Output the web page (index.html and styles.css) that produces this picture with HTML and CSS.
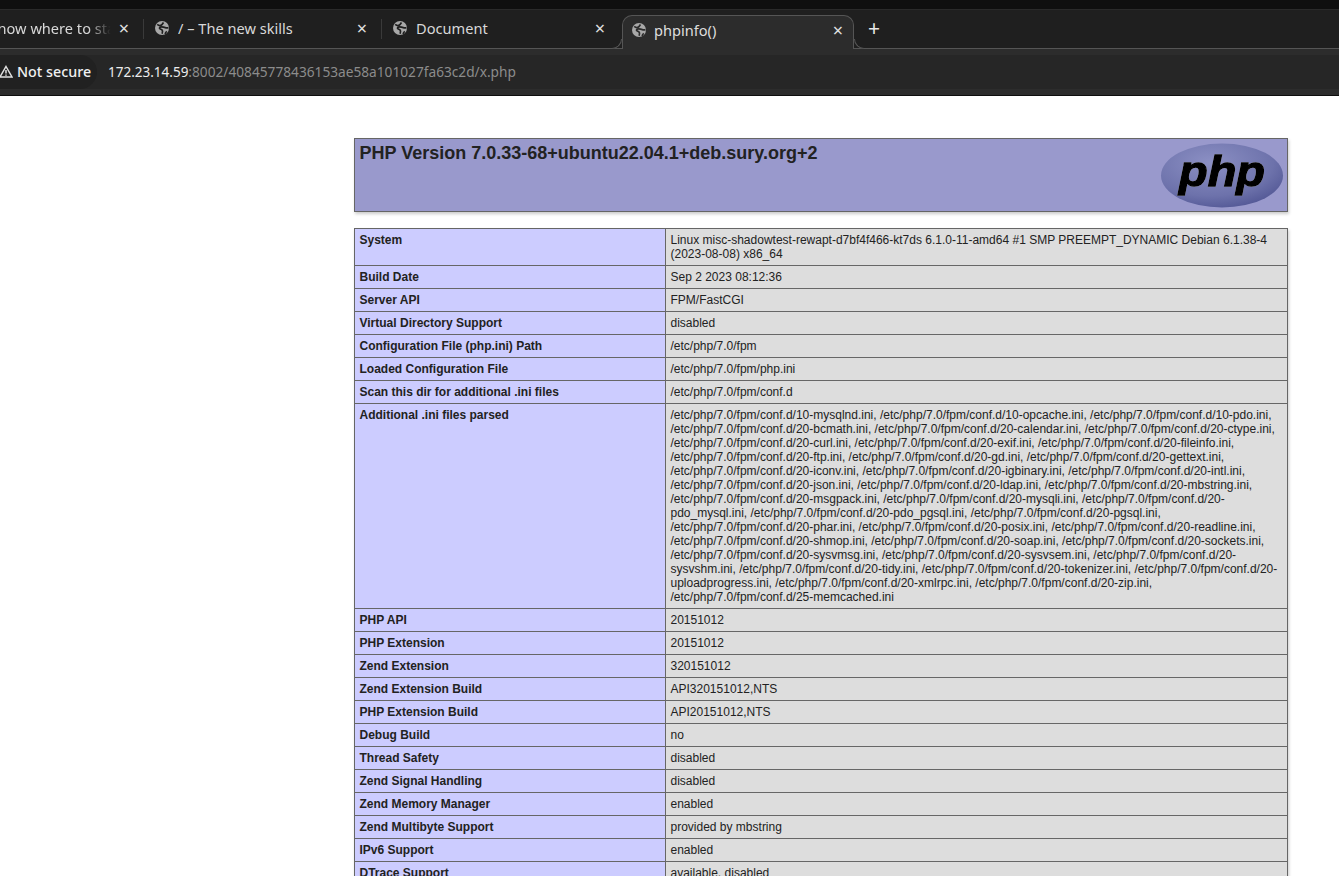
FILE: index.html
```html
<!DOCTYPE html>
<html lang="en">
<head>
  <meta charset="UTF-8" />
  <meta name="viewport" content="width=device-width, initial-scale=1.0" />
  <title>phpinfo()</title>
  <link rel="stylesheet" href="styles.css">
</head>
<body>
  <svg class="defs" width="0" height="0">
    <symbol id="globe" viewBox="0 0 16 16">
      <circle cx="8" cy="8" r="7" fill="#a8a8a8"/>
      <path d="M3.200 4.300c1.500 1.300 3 1.600 4.300.7.700-.5 1.300-1.500 2-2.500" fill="none" stroke="currentColor" stroke-width="1.700"/>
      <path d="M14.500 7.800c-1.700.5-3.500-.3-5-.7-1.500-.4-3.500-.3-4 .7-.5 1 1.500 1.400 2.500 2.200.8.700.6 2.300.1 3.800" fill="none" stroke="currentColor" stroke-width="1.700"/>
      <path d="M11 14c.3-1 .8-1.900 1.800-2.600" fill="none" stroke="currentColor" stroke-width="1.500"/>
    </symbol>
  </svg>

  <div class="tabstrip">
    <div class="tab">
      <span class="tab-title fade">I don't know where to start</span>
      <span class="tab-close">×</span>
    </div>
    <div class="tab sep">
      <svg class="tab-icon"><use href="#globe"/></svg>
      <span class="tab-title">/ – The new skills</span>
      <span class="tab-close">×</span>
    </div>
    <div class="tab sep">
      <svg class="tab-icon"><use href="#globe"/></svg>
      <span class="tab-title">Document</span>
      <span class="tab-close">×</span>
    </div>
    <div class="tab active">
      <svg class="tab-icon"><use href="#globe"/></svg>
      <span class="tab-title">phpinfo()</span>
      <span class="tab-close">×</span>
    </div>
    <span class="new-tab">+</span>
  </div>

  <div class="toolbar">
    <div class="omnibox">
      <div class="chip">
        <svg class="warn" viewBox="0 0 14 13"><path d="M7 1.500 13 12H1z M7 5v3.600 M7 9.600v1.200"/></svg>
        <span>Not secure</span>
      </div>
      <div class="url"><span class="host">172.23.14.59</span>:8002/40845778436153ae58a101027fa63c2d/x.php</div>
    </div>
  </div>

  <div class="page">
    <table class="head">
      <tr class="h">
        <td>
          <svg class="logo" viewBox="0 0 120 65">
            <defs>
              <radialGradient id="oval" cx="0.4" cy="0.3" r="0.8">
                <stop offset="0" stop-color="#8c90c4"/>
                <stop offset="0.65" stop-color="#6d72ab"/>
                <stop offset="1" stop-color="#4c5190"/>
              </radialGradient>
            </defs>
            <ellipse cx="60" cy="32.500" rx="61" ry="32" fill="url(#oval)"/>
            <text class="logo-text" x="60" y="43" text-anchor="middle" textLength="86" lengthAdjust="spacingAndGlyphs">php</text>
          </svg>
          <h1>PHP Version 7.0.33-68+ubuntu22.04.1+deb.sury.org+2</h1>
        </td>
      </tr>
    </table>

    <table>
      <tr><td class="e">System</td><td class="v">Linux misc-shadowtest-rewapt-d7bf4f466-kt7ds 6.1.0-11-amd64 #1 SMP PREEMPT_DYNAMIC Debian 6.1.38-4 (2023-08-08) x86_64</td></tr>
      <tr><td class="e">Build Date</td><td class="v">Sep 2 2023 08:12:36</td></tr>
      <tr><td class="e">Server API</td><td class="v">FPM/FastCGI</td></tr>
      <tr><td class="e">Virtual Directory Support</td><td class="v">disabled</td></tr>
      <tr><td class="e">Configuration File (php.ini) Path</td><td class="v">/etc/php/7.0/fpm</td></tr>
      <tr><td class="e">Loaded Configuration File</td><td class="v">/etc/php/7.0/fpm/php.ini</td></tr>
      <tr><td class="e">Scan this dir for additional .ini files</td><td class="v">/etc/php/7.0/fpm/conf.d</td></tr>
      <tr><td class="e">Additional .ini files parsed</td><td class="v">/etc/php/7.0/fpm/conf.d/10-mysqlnd.ini, /etc/php/7.0/fpm/conf.d/10-opcache.ini, /etc/php/7.0/fpm/conf.d/10-pdo.ini, /etc/php/7.0/fpm/conf.d/20-bcmath.ini, /etc/php/7.0/fpm/conf.d/20-calendar.ini, /etc/php/7.0/fpm/conf.d/20-ctype.ini, /etc/php/7.0/fpm/conf.d/20-curl.ini, /etc/php/7.0/fpm/conf.d/20-exif.ini, /etc/php/7.0/fpm/conf.d/20-fileinfo.ini, /etc/php/7.0/fpm/conf.d/20-ftp.ini, /etc/php/7.0/fpm/conf.d/20-gd.ini, /etc/php/7.0/fpm/conf.d/20-gettext.ini, /etc/php/7.0/fpm/conf.d/20-iconv.ini, /etc/php/7.0/fpm/conf.d/20-igbinary.ini, /etc/php/7.0/fpm/conf.d/20-intl.ini, /etc/php/7.0/fpm/conf.d/20-json.ini, /etc/php/7.0/fpm/conf.d/20-ldap.ini, /etc/php/7.0/fpm/conf.d/20-mbstring.ini, /etc/php/7.0/fpm/conf.d/20-msgpack.ini, /etc/php/7.0/fpm/conf.d/20-mysqli.ini, /etc/php/7.0/fpm/conf.d/20-pdo_mysql.ini, /etc/php/7.0/fpm/conf.d/20-pdo_pgsql.ini, /etc/php/7.0/fpm/conf.d/20-pgsql.ini, /etc/php/7.0/fpm/conf.d/20-phar.ini, /etc/php/7.0/fpm/conf.d/20-posix.ini, /etc/php/7.0/fpm/conf.d/20-readline.ini, /etc/php/7.0/fpm/conf.d/20-shmop.ini, /etc/php/7.0/fpm/conf.d/20-soap.ini, /etc/php/7.0/fpm/conf.d/20-sockets.ini, /etc/php/7.0/fpm/conf.d/20-sysvmsg.ini, /etc/php/7.0/fpm/conf.d/20-sysvsem.ini, /etc/php/7.0/fpm/conf.d/20-sysvshm.ini, /etc/php/7.0/fpm/conf.d/20-tidy.ini, /etc/php/7.0/fpm/conf.d/20-tokenizer.ini, /etc/php/7.0/fpm/conf.d/20-uploadprogress.ini, /etc/php/7.0/fpm/conf.d/20-xmlrpc.ini, /etc/php/7.0/fpm/conf.d/20-zip.ini, /etc/php/7.0/fpm/conf.d/25-memcached.ini</td></tr>
      <tr><td class="e">PHP API</td><td class="v">20151012</td></tr>
      <tr><td class="e">PHP Extension</td><td class="v">20151012</td></tr>
      <tr><td class="e">Zend Extension</td><td class="v">320151012</td></tr>
      <tr><td class="e">Zend Extension Build</td><td class="v">API320151012,NTS</td></tr>
      <tr><td class="e">PHP Extension Build</td><td class="v">API20151012,NTS</td></tr>
      <tr><td class="e">Debug Build</td><td class="v">no</td></tr>
      <tr><td class="e">Thread Safety</td><td class="v">disabled</td></tr>
      <tr><td class="e">Zend Signal Handling</td><td class="v">disabled</td></tr>
      <tr><td class="e">Zend Memory Manager</td><td class="v">enabled</td></tr>
      <tr><td class="e">Zend Multibyte Support</td><td class="v">provided by mbstring</td></tr>
      <tr><td class="e">IPv6 Support</td><td class="v">enabled</td></tr>
      <tr><td class="e">DTrace Support</td><td class="v">available, disabled</td></tr>
    </table>
  </div>
</body>
</html>
```

FILE: styles.css
```css
html, body { height: 100%; overflow: hidden; }
body { margin: 0; background: #fff; color: #222; font-family: "Liberation Sans", Arial, sans-serif; }
.defs { position: absolute; }

/* browser chrome */
.tabstrip { display: flex; align-items: stretch; height: 39px; margin-left: -95px; padding-top: 10px; background: #1f1f1f; box-shadow: inset 0 9px 0 #0f0f0f, inset 0 10px 0 #2a2a2a; font-family: "Noto Sans", sans-serif; font-size: 14.600px; color: #d8d8d8; position: relative; }
.tabstrip::after { content: ""; position: absolute; left: 0; right: 0; bottom: 0; height: 1px; background: #555; }
.tab { width: 238px; flex: none; box-sizing: border-box; display: flex; align-items: center; padding: 0 11px 3px 11px; position: relative; z-index: 1; color: #d8d8d8; }
.tab.sep::before { content: ""; position: absolute; left: 0; top: 9px; height: 20px; width: 1px; background: #3a3a3a; }
.tab-icon { width: 16px; height: 16px; flex: none; margin-right: 8px; color: #1f1f1f; }
.tab-title { flex: 1; white-space: nowrap; overflow: hidden; }
.tab-title.fade { margin-left: 26px; -webkit-mask-image: linear-gradient(to right, #000 84%, transparent 97%); }
.tab-close { width: 16px; text-align: center; font-size: 18px; line-height: 16px; color: #e2e2e2; flex: none; }
.tab.active { background: #2c2c2c; margin: 5px 0 0 3px; width: 232px; padding: 0 7px 6px 8px; border: 1px solid #555; border-bottom: 0; border-radius: 10px 10px 0 0; z-index: 2; color: #dedede; }
.tab.active .tab-icon { color: #2c2c2c; margin-right: 7px; }
.tab.active::before, .tab.active::after { content: ""; position: absolute; bottom: 0; width: 10px; height: 10px; box-sizing: border-box; background: #1f1f1f; border-bottom: 1px solid #555; }
.tab.active::before { left: -11px; border-right: 1px solid #555; border-bottom-right-radius: 10px; }
.tab.active::after { right: -11px; border-left: 1px solid #555; border-bottom-left-radius: 10px; }
.new-tab { margin-left: 14px; font-size: 21px; line-height: 37px; color: #e8e8e8; z-index: 3; }

.toolbar { height: 47px; background: #2c2c2c; border-bottom: 1px solid #0e0e0e; padding-top: 6px; box-sizing: border-box; font-family: "Noto Sans", sans-serif; }
.omnibox { height: 34px; background: #262626; display: flex; align-items: center; font-size: 13.700px; }
.chip { display: flex; align-items: center; height: 34px; width: 97px; flex: none; box-sizing: border-box; padding-bottom: 2px; background: #212121; border-radius: 0 17px 17px 0; color: #f0f0f0; white-space: nowrap; font-weight: 500; font-size: 14.300px; }
.warn { width: 14px; height: 13px; margin-left: -1px; margin-right: 4px; fill: none; stroke: #e0e0e0; stroke-width: 1.500; flex: none; }
.url { margin-left: 11px; padding-bottom: 2px; color: #8c8c8c; white-space: nowrap; }
.host { color: #ececec; font-size: 13.500px; }

/* phpinfo page */
.page { padding: 42px 0 0 353.500px; }
table { border-collapse: collapse; width: 934px; box-shadow: 1px 2px 3px #ccc; margin-bottom: 16px; }
td { border: 1px solid #666; font-size: 12px; padding: 4px 5px; vertical-align: baseline; }
.e { background: #ccf; width: 300px; font-weight: bold; }
.v { background: #ddd; word-wrap: break-word; }
.h td { background: #99c; font-weight: bold; padding-bottom: 3px; }
h1 { margin: 0; font-size: 18px; line-height: 21px; }
.logo { float: right; width: 120px; height: 65px; overflow: visible; }
.logo-text { font-family: "Liberation Sans", sans-serif; font-size: 42px; font-weight: bold; font-style: italic; fill: #000; stroke: #000; stroke-width: 1.300; filter: drop-shadow(0 0 0.6px #e8e8f4); }
```
